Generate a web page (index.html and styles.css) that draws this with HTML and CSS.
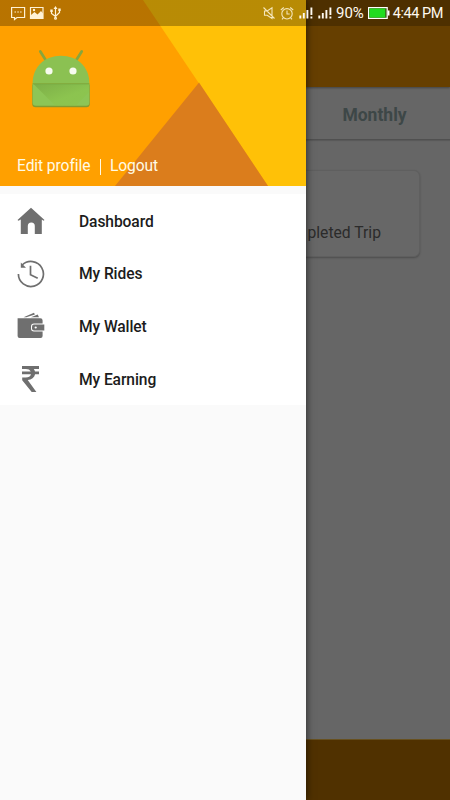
FILE: index.html
```
<!DOCTYPE html>
<html lang="en">
<head>
<meta charset="utf-8">
<title>Dashboard</title>
<link rel="stylesheet" href="styles.css">
</head>
<body>
<div class="screen">
  <main class="app">
    <header class="toolbar"></header>
    <nav class="tabs"><span class="tab">Monthly</span></nav>
    <section class="content">
      <article class="card"><span>pleted Trip</span></article>
    </section>
    <footer class="footer"></footer>
  </main>

  <aside class="drawer">
    <header class="profile">
      <svg class="backdrop" viewBox="0 0 306 186" preserveAspectRatio="none">
        <path fill="#ffa000" d="M0 0h306v186H0z"/>
        <path fill="#ffc107" d="M143 0h163v186h-38z"/>
        <path fill="#db7d1c" d="M199 82.5 268 186H115z"/>
      </svg>
      <svg class="avatar" viewBox="0 0 60 60">
        <defs>
          <linearGradient id="fold" x1="0" y1="0" x2="1" y2="1">
            <stop offset="0" stop-color="#6f9c3c"/>
            <stop offset=".6" stop-color="#8bc34a"/>
          </linearGradient>
        </defs>
        <path d="M9.3 2.5l5.2 8.2M50.7 2.5l-5.2 8.2" stroke="#87a63c" stroke-width="2.7" stroke-linecap="round"/>
        <path d="M1.2 35.5h57.6v19.2a3.5 3.5 0 0 1-3.5 3.5H4.7a3.5 3.5 0 0 1-3.5-3.5z" fill="#829b32"/>
        <path d="M1.6 34.5C1.6 17.8 13.8 6.8 30 6.8s28.4 11 28.4 27.7z" fill="#8bc152"/>
        <path d="M1.6 34.5h56.8v18.9a3.3 3.3 0 0 1-3.3 3.3H4.9a3.3 3.3 0 0 1-3.3-3.3z" fill="#8dc556"/>
        <path d="M2.5 35l21.5 21.5H45L58 43v-8z" fill="url(#fold)" opacity=".55"/>
        <path d="M1.6 34.8h56.8" stroke="#74a741" stroke-width="1"/>
        <circle cx="18" cy="22" r="3.6" fill="#f7fbef"/>
        <circle cx="42" cy="22" r="3.6" fill="#f7fbef"/>
      </svg>
      <div class="links"><a>Edit profile</a><i class="divider"></i><a>Logout</a></div>
    </header>
    <ul class="menu">
      <li>
        <svg class="icon" viewBox="0 0 28 28"><path fill="#6f6f6f" d="M14 .8 27.5 13l-1 .8-1.7-1.3V27h-7v-8a3.5 3.5 0 0 0-7 0v8h-7V12.5L1.5 13.8l-1-.8z"/></svg>
        <span>Dashboard</span>
      </li>
      <li>
        <svg class="icon" viewBox="0 0 28 28"><g fill="none" stroke="#6f6f6f" stroke-width="1.7"><path d="M1.4 14A12.5 12.5 0 1 0 5.2 5"/><path d="M13.5 5.8v9l7.2 3.5"/></g><path fill="#6f6f6f" d="M3.8 2.4V7.7H9z"/></svg>
        <span>My Rides</span>
      </li>
      <li>
        <svg class="icon" viewBox="0 0 28 28"><g fill="#6f6f6f"><path d="M6.5 5.3 17 .8l.9 1.6L9.3 5.3zM14 5.3l6.7-2.8 1.3 2.8z"/><path d="M.6 6.3h22.7a2.3 2.3 0 0 1 2.3 2.3v2.8H17a3 3 0 0 0-3 3v2.2a3 3 0 0 0 3 3h8.600v4.400a2 2 0 0 1-2 2H2.600a2 2 0 0 1-2-2z"/><path d="M17 12.500h10.300v6H17a2 2 0 0 1-2-2v-2a2 2 0 0 1 2-2z"/></g><circle cx="18.700" cy="15.500" r="1.100" fill="#fff"/></svg>
        <span>My Wallet</span>
      </li>
      <li>
        <svg class="icon" viewBox="0 0 28 28"><path fill="#6f6f6f" d="M5 1h17v2.900h-5.200c.6.800 1 1.600 1.200 2.500h4v2.900h-3.900c-.7 3.400-3.500 5.400-7.400 5.800L19.400 27h-4.700L5.200 15.300v-2.800h3.600c2.800 0 4.500-1.100 5.200-3.200H5V6.400h8.700C12.900 4.700 11.400 3.900 8.900 3.900H5z"/></svg>
        <span>My Earning</span>
      </li>
    </ul>
  </aside>

  <div class="status">
    <svg class="notices" viewBox="0 0 60 26" fill="none" stroke="#fff2d5" stroke-width="1.2">
      <path d="M1.600 7.500h13v10H7l-2.500 2v-2H1.600z"/>
      <path d="M4.500 12h1.500m1.300 0h1.500m1.300 0h1.500" />
      <path d="M20.500 7.500h12.500v11H20.500z"/>
      <path fill="#fff2d5" stroke="none" d="M21 18v-3l3.500-3 3 2.500L31 11l2 2.500V18z"/><circle cx="24" cy="10" r=".6"/>
      <path d="M45.500 8v10M41.500 11v2.500l4 3 4-4V10"/>
      <path fill="#fff2d5" stroke="none" d="m45.500 6 2 3h-4zM40.300 9.500h2.400v2.400h-2.400zM48.300 8.500h2.400v2.400h-2.400z"/><circle cx="45.500" cy="18.300" r=".9"/>
    </svg>
    <svg class="signals" viewBox="0 0 72 26" fill="none" stroke="#f5e6ba" stroke-width="1.100">
      <path d="M2.500 11h2.700L10 7.800v10.700l-4.800-3.300H2.500zM1.500 7.500l11 11"/>
      <circle cx="25" cy="13.800" r="5.200"/><path d="M25 10.500v3.500h2.700M18.800 10l3-2.500M31.200 10l-3-2.500M21.300 17.800l-1.300 1.500M28.700 17.800l1.300 1.500"/>
      <g stroke="#fffaf0" stroke-width="1.900"><path d="M38.300 15.500v3M41.800 13v5.500M45.400 10v8.500M49.400 7.500v7.500M49.400 16.500v2M57.300 15.500v3M60.800 13v5.500M64.400 10v8.500M68.400 7.500v7.500M68.400 16.500v2"/></g>
    </svg>
    <span class="percent">90%</span>
    <svg class="battery" viewBox="0 0 22 12"><path fill="#385312" stroke="#fff" stroke-width="1.200" d="M.6.6h18.600v10.800H.6z"/><path fill="#20dc20" d="M1.500 1.500h15.800v9H1.500z"/><path fill="#fff" d="M19.800 3.500h1.700v5h-1.700z"/></svg>
    <span class="time">4:44 PM</span>
  </div>
</div>
</body>
</html>
```
FILE: styles.css
```
* { box-sizing: border-box; }
body { margin: 0; font-family: Roboto, "Liberation Sans", sans-serif; }
.screen { position: relative; width: 450px; height: 800px; overflow: hidden; }

.app { display: flex; flex-direction: column; height: 800px; background: #666; }
.toolbar { height: 87px; background: #663f00; box-shadow: 0 1px 2px rgba(0, 0, 0, .35); }
.tabs { display: flex; justify-content: flex-end; height: 53px; border-bottom: 1px solid #505050; box-shadow: 0 1px 1px rgba(0, 0, 0, .12); }
.tab { width: 151px; line-height: 56px; text-align: center; font-size: 17.5px; font-weight: 700; color: #3d4747; }
.content { flex: 1; padding: 30px 30px 0; }
.card { display: flex; justify-content: flex-end; align-items: flex-end; height: 87px; padding: 0 38px 13px; border: 1px solid #5f5f5f; border-radius: 6px; background: #676767; box-shadow: 0 1px 2px rgba(0, 0, 0, .25); font-size: 15.7px; line-height: 20px; color: #2b2b2b; }
.footer { height: 61px; background: #503100; border-top: 1px solid #67501f; }

.drawer { position: absolute; z-index: 2; top: 0; left: 0; width: 306px; height: 800px; background: #fafafa; box-shadow: 0 0 8px rgba(0, 0, 0, .65); }
.profile { position: relative; display: flex; flex-direction: column; justify-content: space-between; height: 186px; padding: 49px 17px 9px; }
.backdrop { position: absolute; top: 0; left: 0; width: 306px; height: 186px; }
.avatar { position: relative; width: 60px; height: 60px; margin-left: 14px; }
.links { position: relative; display: flex; align-items: center; font-size: 15.6px; letter-spacing: -.08px; line-height: 21px; color: #fffbe6; }
.divider { width: 1px; height: 16px; margin: 0 9px 0 9.5px; background: #fffbe6; }

.menu { margin: 8px 0 0; padding: 0; list-style: none; background: #fff; }
.menu li { display: flex; align-items: center; gap: 34px; height: 52.7px; padding: 1px 17px 0; font-size: 15.6px; letter-spacing: -.09px; font-weight: 500; line-height: 20px; color: #1c1c1c; }
.menu span { padding-top: 1.6px; }
.icon { width: 28px; height: 28px; }

.status { position: absolute; z-index: 3; top: 0; left: 0; display: flex; align-items: center; width: 450px; height: 26px; padding: 0 7px 0 10px; background: linear-gradient(to right, rgba(0, 0, 0, .28) 306px, rgba(0, 0, 0, .24) 306px); color: #fffaf0; font-size: 15px; line-height: 27px; white-space: nowrap; }
.notices { width: 60px; height: 26px; flex: none; }
.signals { width: 72px; height: 26px; margin-left: 192px; margin-right: 2px; flex: none; }
.percent { width: 32px; flex: none; }
.battery { width: 22px; height: 12px; flex: none; }
.time { margin-left: auto; font-size: 14.5px; letter-spacing: -.45px; }
```
